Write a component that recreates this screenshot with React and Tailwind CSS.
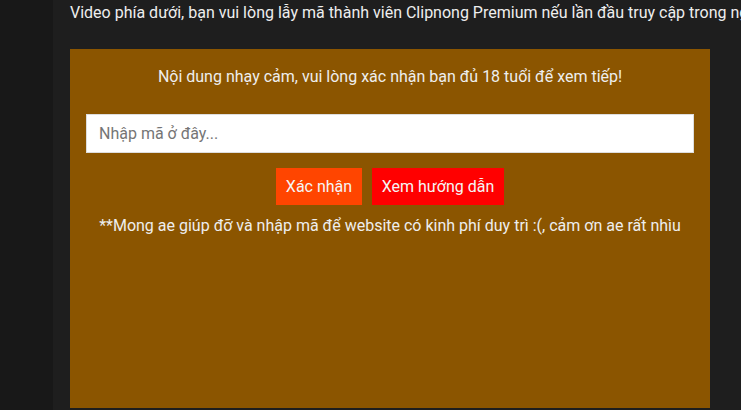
export default function App() {
  return (
    <div className="flex h-[410px] w-[741px] overflow-hidden bg-[#181818] font-['Roboto',sans-serif] text-[16px] text-[#eeeeee]">
      <div className="w-[53px] shrink-0 bg-[#181818]" />
      <div className="flex-1 bg-[#1e1e1e] pl-[17px]">
        <p className="mt-[3px] whitespace-nowrap leading-[20px]">
          Video phía dưới, bạn vui lòng lẫy mã thành viên Clipnong Premium nếu lần đầu truy cập trong ngày
        </p>
        <div className="mt-[26px] h-[359px] w-[640px] bg-[#8b5500] px-[16px] pt-[18px]">
          <p className="text-center leading-[20px]">
            Nội dung nhạy cảm, vui lòng xác nhận bạn đủ 18 tuổi để xem tiếp!
          </p>
          <input
            type="text"
            placeholder="Nhập mã ở đây..."
            className="mt-[27px] block h-[39px] w-[608px] border border-[#dddddd] bg-white px-[12px] text-[16px] text-[#555] outline-none placeholder:text-[#757575]"
          />
          <div className="mt-[15px] flex justify-center gap-[10px]">
            <button className="h-[37px] w-[86px] bg-[#ff4500] text-[16px] text-[#f5f5f5]">Xác nhận</button>
            <button className="h-[37px] w-[132px] bg-[#ff0000] text-[16px] text-[#f5f5f5]">Xem hướng dẫn</button>
          </div>
          <p className="mt-[11px] text-center leading-[20px]">
            **Mong ae giúp đỡ và nhập mã để website có kinh phí duy trì :(, cảm ơn ae rất nhìu
          </p>
        </div>
      </div>
    </div>
  );
}
